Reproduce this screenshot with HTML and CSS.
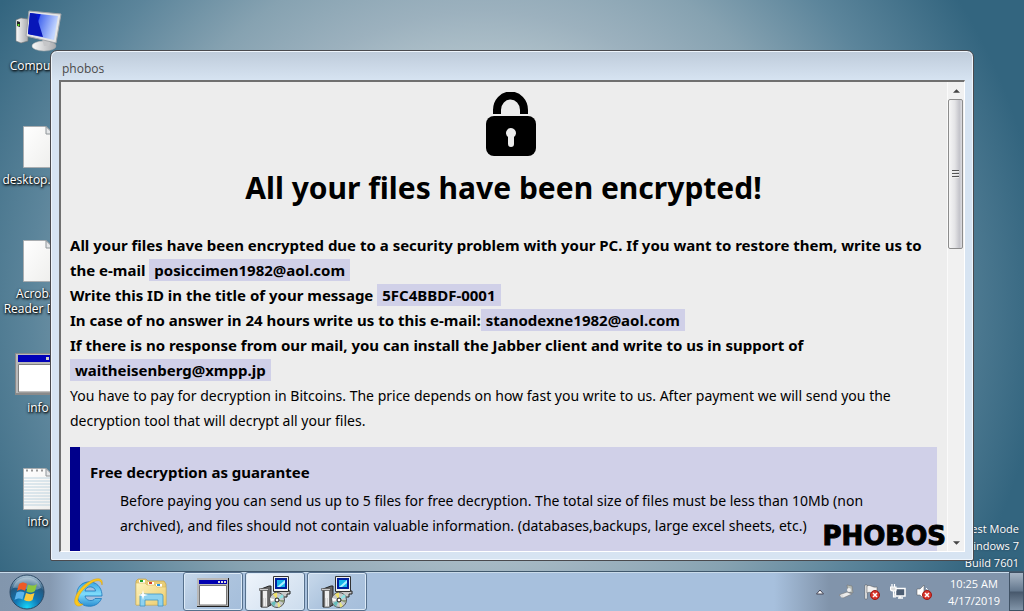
FILE: index.html
```html
<!DOCTYPE html>
<html lang="en">
<head>
  <meta charset="UTF-8">
  <meta name="viewport" content="width=device-width, initial-scale=1">
  <title>phobos</title>
  <link rel="stylesheet" href="styles.css">
</head>
<body>
  <svg width="0" height="0" class="defs" aria-hidden="true">
    <defs>
      <linearGradient id="screen" x1="0" x2="1" y1="0" y2="0.3">
        <stop offset="0" stop-color="#0b1fb0"/><stop offset="0.38" stop-color="#0416d8"/>
        <stop offset="0.42" stop-color="#4a6cf0"/><stop offset="1" stop-color="#c3d6ff"/>
      </linearGradient>
      <linearGradient id="paper" x1="0" x2="1" y1="0" y2="1">
        <stop offset="0" stop-color="#fff"/><stop offset="1" stop-color="#eeeeec"/>
      </linearGradient>
      <linearGradient id="metal" x1="0" x2="1" y1="0" y2="0">
        <stop offset="0" stop-color="#fafafa"/><stop offset="1" stop-color="#a9abae"/>
      </linearGradient>
      <radialGradient id="orb" cx="0.5" cy="0.95" r="0.9">
        <stop offset="0" stop-color="#19d5f7"/><stop offset="0.4" stop-color="#1176b4"/>
        <stop offset="0.75" stop-color="#23587f"/><stop offset="1" stop-color="#9fb9cc"/>
      </radialGradient>
      <linearGradient id="ie" x1="0" x2="0" y1="0" y2="1">
        <stop offset="0" stop-color="#3aa4e0"/><stop offset="0.5" stop-color="#7fdcfb"/><stop offset="1" stop-color="#2b8fd3"/>
      </linearGradient>
      <linearGradient id="folder" x1="0" x2="1" y1="0" y2="1">
        <stop offset="0" stop-color="#fdf3bd"/><stop offset="1" stop-color="#eccb6c"/>
      </linearGradient>
      <symbol id="page" viewBox="0 0 48 48">
        <path d="M9.500 4.500H32L39.500 12V45.500H9.500Z" fill="url(#paper)" stroke="#a9adb0"/>
        <path d="M32 4.500V12H39.500Z" fill="#e4e6e8" stroke="#8e9498"/>
      </symbol>
      <symbol id="installer" viewBox="0 0 32 32">
        <path d="M15 15H31V18H28V21H17V18Z" fill="#c9c9c9" stroke="#222"/>
        <path d="M14.500 0.500H29.500V15.500H14.500Z" fill="#f2f2f2" stroke="#333"/>
        <path d="M17 3H27V12H17Z" fill="#16b4ea" stroke="#00209c" stroke-width="2"/>
        <path d="M18 11L26 4V7L21 11Z" fill="#a9f0ff"/>
        <path d="M2 13L10 10H12V29L8 31H2Z" fill="#666" stroke="#222"/>
        <path d="M3.500 14H8.500V31H3.500Z" fill="#efefef" stroke="#777"/>
        <path d="M0.500 12.500H9.500V14.500H0.500Z" fill="#c8c8c8" stroke="#444" stroke-width="0.600"/>
        <path d="M4 23H8M4 25H8M4 27H8M4 29H8" stroke="#bbb" stroke-dasharray="1 1"/>
        <circle cx="18" cy="24" r="7.500" fill="#c5c8ca" stroke="#555"/>
        <path d="M18 24L14 18L18 16.500Z" fill="#f0e268"/><path d="M18 24L23 18L25 21Z" fill="#8fe4e5"/>
        <path d="M18 24L12 27L15 31Z" fill="#66bdbb"/><path d="M18 24L22 30L19 31.500Z" fill="#e7e580"/>
        <path d="M18 24L11 22L12 25Z" fill="#fff"/><path d="M18 24L25 24L25 27Z" fill="#8e9a78"/>
        <circle cx="18" cy="24" r="2" fill="#fff" stroke="#111"/>
      </symbol>
      <symbol id="blocked" viewBox="0 0 10 10">
        <circle cx="5" cy="5" r="4.500" fill="#d9342b" stroke="#9c1b16"/>
        <path d="M3 3L7 7M7 3L3 7" stroke="#fff" stroke-width="1.500"/>
      </symbol>
    </defs>
  </svg>

  <main class="desktop">
    <nav class="shortcuts">
      <a href="#">
        <svg viewBox="0 0 48 48">
          <path d="M2 12L7 10L14 11V33L7 35L2 33Z" fill="url(#metal)" stroke="#777" stroke-width="0.600"/>
          <path d="M3 13L6 14V19L3 18Z" fill="#222"/><circle cx="4.500" cy="17" r="1" fill="#6f2"/>
          <ellipse cx="30" cy="38" rx="12" ry="5" fill="url(#metal)" stroke="#aaa" stroke-width="0.500"/>
          <path d="M28 31H37L35 38H30Z" fill="#c5c6c8"/>
          <path d="M15 3L47 6L42 35L12 28Z" fill="#e4e5e6" stroke="#a2a5a9"/>
          <path d="M16 5L44 8L40 32L14 26Z" fill="url(#screen)"/>
          <path d="M16 5L22 6L29 29L14 26Z" fill="#0716b8"/>
        </svg>
        <span>Computer</span>
      </a>
      <a href="#"><svg><use href="#page"/></svg><span>desktop.ini...</span></a>
      <a href="#"><svg><use href="#page"/></svg><span>Acrobat<br>Reader DC...</span></a>
      <a href="#">
        <svg viewBox="0 0 48 48">
          <path d="M1 3H47V45H1Z" fill="#8a8a8a"/><path d="M2 4H46V43H2Z" fill="#b9b9b9"/>
          <path d="M4 5H45V12H4Z" fill="#0000b8"/><path d="M32 7H35V10H32ZM37 7H40V10H37Z" fill="#ccc"/>
          <path d="M4.500 14.500H44V42H4.500Z" fill="#fff" stroke="#808080"/>
        </svg>
        <span>info</span>
      </a>
      <a href="#">
        <svg viewBox="0 0 48 48">
          <use href="#page"/>
          <path d="M10 14H39M10 17H39M10 20H39M10 23H39M10 26H39M10 29H39M10 32H39M10 35H39M10 38H39M10 41H39" stroke="#bed4e0"/>
          <path d="M12 6.500H31" stroke="#999" stroke-width="2" stroke-dasharray="2 3"/>
        </svg>
        <span>info</span>
      </a>
    </nav>

    <p class="build">Test Mode<br>Windows 7<br>Build 7601</p>

    <section class="window">
      <header class="caption">phobos</header>
      <div class="frame">
        <article class="note">
          <svg class="padlock" viewBox="-15 0 65 65" role="img" aria-label="Padlock">
            <path d="M12 22V18A13.500 14.500 0 0 1 39 18V22" transform="translate(-1)" fill="none" stroke="#000" stroke-width="8"/>
            <rect y="24" width="50" height="40" rx="8"/>
            <path d="M22 45A5 5 0 1 1 28 45V52A3 3 0 0 1 22 52Z" fill="#ededed"/>
          </svg>
          <h1>All your files have been encrypted!</h1>
          <div class="bold">
            <p>All your files have been encrypted due to a security problem with your PC. If you want to restore them, write us to the e-mail <span class="mark">posiccimen1982@aol.com</span></p>
            <p>Write this ID in the title of your message <span class="mark">5FC4BBDF-0001</span></p>
            <p>In case of no answer in 24 hours write us to this e-mail:<span class="mark">stanodexne1982@aol.com</span></p>
            <p>If there is no response from our mail, you can install the Jabber client and write to us in support of <span class="mark">waitheisenberg@xmpp.jp</span></p>
          </div>
          <p>You have to pay for decryption in Bitcoins. The price depends on how fast you write to us. After payment we will send you the decryption tool that will decrypt all your files.</p>
          <div class="notice">
            <h2>Free decryption as guarantee</h2>
            <p>Before paying you can send us up to 5 files for free decryption. The total size of files must be less than 10Mb (non archived), and files should not contain valuable information. (databases,backups, large excel sheets, etc.)</p>
          </div>
          <div class="logo">PHOBOS</div>
        </article>
        <div class="scrollbar">
          <button aria-label="Scroll up"><svg viewBox="0 0 8 4"><path d="M0 4L4 0L8 4Z" fill="#444"/></svg></button>
          <div class="track"><div class="thumb"><i></i><i></i><i></i></div></div>
          <button aria-label="Scroll down"><svg viewBox="0 0 8 4"><path d="M0 0L4 4L8 0Z" fill="#444"/></svg></button>
        </div>
      </div>
    </section>
  </main>

  <footer class="taskbar">
    <button class="start" aria-label="Start">
      <svg viewBox="0 0 36 36">
        <circle cx="18" cy="18" r="17" fill="url(#orb)" stroke="#2c4a66"/>
        <path d="M4 14C7 0 29 0 32 14C24 19 12 12 4 14Z" fill="#fff" opacity="0.300"/>
        <path d="M10 10C13 8 15 8 18 10L16 17C13 15 11 15 8 17Z" fill="#ee5a24"/>
        <path d="M19 10.500C22 12 25 12 28 10L26 17C23 19 20 19 17.500 17.500Z" fill="#8cc63e"/>
        <path d="M7.500 18.500C10 17 13 17 15.500 18.500L13.500 25.500C11 24 8.500 24 5.500 26Z" fill="#5bb4ee"/>
        <path d="M17 19C20 20.500 23 20.500 25.500 19L23.500 26C21 28 18 27.500 15 26Z" fill="#fcca3c"/>
      </svg>
    </button>
    <button class="pin" aria-label="Internet Explorer">
      <svg viewBox="0 0 32 32">
        <path d="M29 20H12C12.500 25 20 26 22 22.500H28.500C24 34 4 33 4 18C4 2 29 1 29 20ZM12 15H22.500C22 9.500 12.500 9.500 12 15Z" fill="url(#ie)" stroke="#1c77bb" stroke-width="0.800"/>
        <path d="M29 9C31 1 23 1 14 7C4 14 -1 25 3 29C5 31 8 30 10 28C3 29 3 21 11 13C19 5 28 1 29 9Z" fill="#fbc81b" stroke="#dd9c0c" stroke-width="0.500"/>
      </svg>
    </button>
    <button class="pin" aria-label="Windows Explorer">
      <svg viewBox="0 0 32 32">
        <path d="M1 5L3 3H11L13 5H29L31 8V29H1Z" fill="#e8cd78" stroke="#bf9a3a" stroke-width="0.600"/>
        <path d="M4 4H10V8H4ZM13 6H19V10H13ZM21 8H27V12H21Z" fill="#fff"/>
        <path d="M5 4H8V6H5Z" fill="#21a32d"/><path d="M14 6H17V8H14Z" fill="#d9442c"/><path d="M22 8H25V10H22Z" fill="#2694df"/>
        <path d="M1 7H10L12 9H20L22 11H31V29H1Z" fill="url(#folder)" stroke="#d6b659" stroke-width="0.600"/>
        <path d="M5 30V20Q5 18 7 18H26Q28 18 28 20V30H23V24H10V30Z" fill="#8ed2ef" stroke="#4296c3" stroke-width="0.800"/>
        <path d="M8 14L9 18L13 19L9 20L8 24L7 20L3 19L7 18Z" fill="#fff"/>
      </svg>
    </button>
    <div class="tasks">
      <button aria-label="phobos">
        <svg viewBox="0 0 32 32">
          <path d="M0 2H32V31H0Z" fill="#222"/><path d="M0 2H31V30H0Z" fill="#b8b8b8"/>
          <path d="M2 4H30V8H2Z" fill="#0000b0"/><path d="M21 5H23V7H21ZM24 5H26V7H24ZM27 5H29V7H27Z" fill="#ddd"/>
          <path d="M2.500 9.500H29.500V29H2.500Z" fill="#fff" stroke="#777"/>
        </svg>
      </button>
      <button class="active" aria-label="Setup 1"><svg><use href="#installer"/></svg></button>
      <button aria-label="Setup 2"><svg><use href="#installer"/></svg></button>
    </div>
    <div class="tray">
      <button aria-label="Show hidden icons"><svg viewBox="0 0 16 16"><path d="M4.500 10L8 6L11.500 10Z" fill="#fff" stroke="#445"/></svg></button>
      <button aria-label="Device">
        <svg viewBox="0 0 16 16">
          <path d="M9 1L14 2L15 9L10 8Z" fill="#b9beb8" stroke="#777" stroke-width="0.600"/>
          <path d="M1 11L9 8L14 10L5 14Z" fill="#ececec" stroke="#777" stroke-width="0.600"/>
          <circle cx="11" cy="6" r="2" fill="#eee"/><circle cx="4" cy="12" r="1.500" fill="#ddd"/>
        </svg>
      </button>
      <button aria-label="Action Center">
        <svg viewBox="0 0 16 16">
          <path d="M1 1H3V15H1Z" fill="#fff" stroke="#555" stroke-width="0.500"/>
          <path d="M3 2C6 0 8 4 13 3V9C8 10 6 7 3 9Z" fill="#f2f2f2" stroke="#555" stroke-width="0.500"/>
          <use href="#blocked" x="6" y="6" width="10" height="10"/>
        </svg>
      </button>
      <button aria-label="Network">
        <svg viewBox="0 0 16 16">
          <path d="M5.500 4.500H15V12H5.500Z" fill="#4c5d72" stroke="#fff" stroke-width="1.500"/>
          <path d="M8 14H13M10 12V14" stroke="#fff" stroke-width="1.500"/>
          <path d="M0.500 3H6V6Q6 7 3.500 7Q0.500 7 0.500 5ZM2 0V3M4.500 0V3M3.500 7V13H6" fill="#ddd" stroke="#fff" stroke-width="1.200"/>
        </svg>
      </button>
      <button aria-label="Volume">
        <svg viewBox="0 0 16 16">
          <path d="M1 5H4L8 1V15L4 11H1Z" fill="#fff" stroke="#555" stroke-width="0.500"/>
          <path d="M10 4Q12 5 11 7" fill="none" stroke="#fff"/>
          <use href="#blocked" x="6" y="6" width="10" height="10"/>
        </svg>
      </button>
    </div>
    <div class="clock">10:25 AM<br>4/17/2019</div>
    <button class="show-desktop" aria-label="Show desktop"></button>
  </footer>
</body>
</html>
```
FILE: styles.css
```css
* { margin:0; padding:0; box-sizing:border-box; }
html, body { height:100%; }
body { display:flex; flex-direction:column; overflow:hidden; font-family:"Open Sans","Noto Sans",sans-serif; font-size:12px;
       background:radial-gradient(circle 600px at 47% 49%, #c0ced4 0, #b4c5cd 38%, #9cb1be 48%, #86a2b1 60%, #5c859b 75%, #33657f 94%); }
button { border:0; background:none; display:flex; align-items:center; justify-content:center; }
.defs { position:absolute; }

.desktop { flex:1; position:relative; min-height:0; }
.shortcuts { width:76px; padding-top:8px; }
.shortcuts a { display:flex; flex-direction:column; align-items:center; gap:2px; height:114px; white-space:nowrap;
               color:#fff; text-decoration:none; text-align:center; line-height:15px; text-shadow:1px 1px 2px #000, 0 1px 3px #000; }
.shortcuts svg { width:48px; height:48px; flex:none; }
.build { position:absolute; right:5px; bottom:0; color:#fff; font-size:11px; text-align:right; line-height:17px; text-shadow:0 0 2px #234; }

.window { position:absolute; inset:50px 50px 10px 50px; display:flex; flex-direction:column; padding:0 8px 8px;
          background:linear-gradient(#becbda 0, #d7e4f2 30px); border:1px solid #4a4a4e; border-radius:7px 7px 2px 2px;
          box-shadow:inset 0 0 0 1px #eef5fc; }
.caption { height:29px; padding:9px 3px 0; line-height:18px; color:#4a4a4a; }
.frame { flex:1; min-height:0; display:flex; background:#ededed; border:2px solid; border-color:#707070 #fff #fff #707070; border-right-width:1px; border-bottom-width:1px; }

.note { flex:1; position:relative; overflow:hidden; padding:10px 10px 0 9px; font:14px/25px "Noto Sans",sans-serif; color:#000; }
.padlock { display:block; width:65px; height:65px; margin:0 auto; }
.note h1 { margin:13px 0 27px; font-size:30px; line-height:36px; text-align:center; }
.bold { font-size:15px; font-weight:bold; }
.mark { background:#d0d0e8; padding:1px 5px; }
.notice { margin-top:14px; padding:13px 10px 40px; background:#d0d0e8; border-left:10px solid #00008b; }
.notice h2 { font-size:15px; line-height:25px; }
.notice p { margin:3px 30px 0; }
.logo { position:absolute; right:1px; bottom:0; font:bold 26px/30px "DejaVu Sans",sans-serif; -webkit-text-stroke:1px #000; }

.scrollbar { width:17px; display:flex; flex-direction:column; background:#f1f1f1; border-left:1px solid #fafafa; }
.scrollbar button { height:17px; }
.scrollbar svg { width:7px; height:4px; }
.track { flex:1; }
.thumb { height:150px; width:15px; display:flex; flex-direction:column; align-items:center; justify-content:center; gap:1px;
         border:1px solid #8c8c8c; border-radius:2px; background:linear-gradient(90deg, #f6f6f6 0, #e4e4e6 45%, #c4c4ca 80%, #dcdce0); }
.thumb i { width:7px; height:2px; background:#555; border-bottom:1px solid #eee; }

.taskbar { height:40px; flex:none; display:flex; align-items:stretch; border-top:1px solid #40586c; box-shadow:inset 0 1px #c9dbea;
           background:linear-gradient(90deg, #8296ad 0, #8599b1 50px, #a7c0dd 85px, #a7c0dd calc(100% - 250px), #8194ab calc(100% - 195px), #8194ab); }
.start { width:54px; }
.start svg { width:36px; height:36px; }
.pin { width:62px; padding-left:8px; }
.pin svg { width:32px; height:32px; }
.tasks { flex:1; display:flex; gap:2px; padding-left:5px; }
.tasks button { width:60px; border:1px solid #56708c; border-radius:3px; box-shadow:inset 0 0 0 1px #dceaf7;
                background:linear-gradient(135deg, #c8d9eb 0, #adc4de 50%, #a5bedb); }
.tasks .active { background:linear-gradient(135deg, #eef4fb, #ccdced); }
.tasks svg { width:32px; height:32px; }
.tray { display:flex; align-items:center; gap:10px; padding-right:16px; }
.tray svg { width:16px; height:16px; }
.clock { color:#fff; font-size:11px; text-align:center; line-height:17px; padding:3px 9px 0 0; }
.show-desktop { width:15px; border:1px solid #3f5164; background:linear-gradient(#a7b5c5, #64788e 48%, #48596d 52%, #8194a8); }
```
